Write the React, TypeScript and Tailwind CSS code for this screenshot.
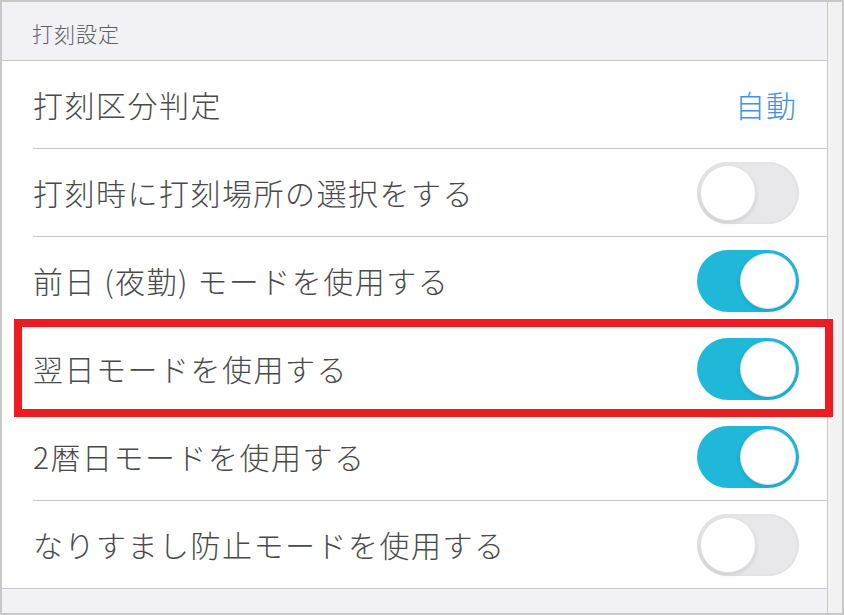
import React from 'react';

const ROWS: { label: string; kind: 'value' | 'on' | 'off'; value?: string }[] = [
  { label: '打刻区分判定', kind: 'value', value: '自動' },
  { label: '打刻時に打刻場所の選択をする', kind: 'off' },
  { label: '前日 (夜勤) モードを使用する', kind: 'on' },
  { label: '翌日モードを使用する', kind: 'on' },
  { label: '2暦日モードを使用する', kind: 'on' },
  { label: 'なりすまし防止モードを使用する', kind: 'off' },
];

function Toggle({ on }: { on: boolean }) {
  return (
    <div
      className={
        on
          ? 'flex h-[62px] w-[102px] items-center justify-end rounded-full bg-[#1fb8d8] p-[3px]'
          : 'flex h-[62px] w-[102px] items-center justify-start rounded-full bg-[#e8e8ea] p-[3px] shadow-[inset_0_0_0_2px_#e3e3e5]'
      }
    >
      <div className="h-[56px] w-[56px] rounded-full border border-[#e0e0e0] bg-white shadow-[0_2px_4px_rgba(0,0,0,0.12)]" />
    </div>
  );
}

export default function App() {
  return (
    <div
      className="relative h-[615px] w-[844px] overflow-hidden border-2 border-[#c8c8c8] bg-[#f2f2f2]"
      style={{ fontFamily: '"Noto Sans CJK JP", "Noto Sans", sans-serif' }}
    >
      <div className="flex h-full">
        <div className="flex w-[826px] flex-col border-r border-[#c8c8c8] bg-[#f1f1f6]">
          {/* section header */}
          <div className="flex h-[59px] items-center border-b border-[#c8c8cc] pl-[30px] pt-[6px] text-[21px] font-light tracking-[1px] text-[#5f5f64]">
            打刻設定
          </div>

          <div className="border-b border-[#c8c8cc] bg-white">
            {ROWS.map((row, i) => (
              <div key={row.label} className="pl-[31px]">
                <div
                  className={
                    i === ROWS.length - 1
                      ? 'flex h-[87px] items-center justify-between pr-[28px]'
                      : 'flex h-[88px] items-center justify-between border-b border-[#c8c8cc] pr-[28px]'
                  }
                >
                  <span className="text-[30px] font-light tracking-[1.5px] text-[#4a4a4a]">{row.label}</span>
                  {row.kind === 'value' ? (
                    <span className="mr-[2px] text-[30px] font-light tracking-[1px] text-[#4a90e2]">{row.value}</span>
                  ) : (
                    <Toggle on={row.kind === 'on'} />
                  )}
                </div>
              </div>
            ))}
          </div>
        </div>
      </div>

      {/* highlight box */}
      <div className="pointer-events-none absolute left-[12px] top-[317px] h-[98px] w-[819px] border-[8px] border-[#ed1c24]" />
    </div>
  );
}
